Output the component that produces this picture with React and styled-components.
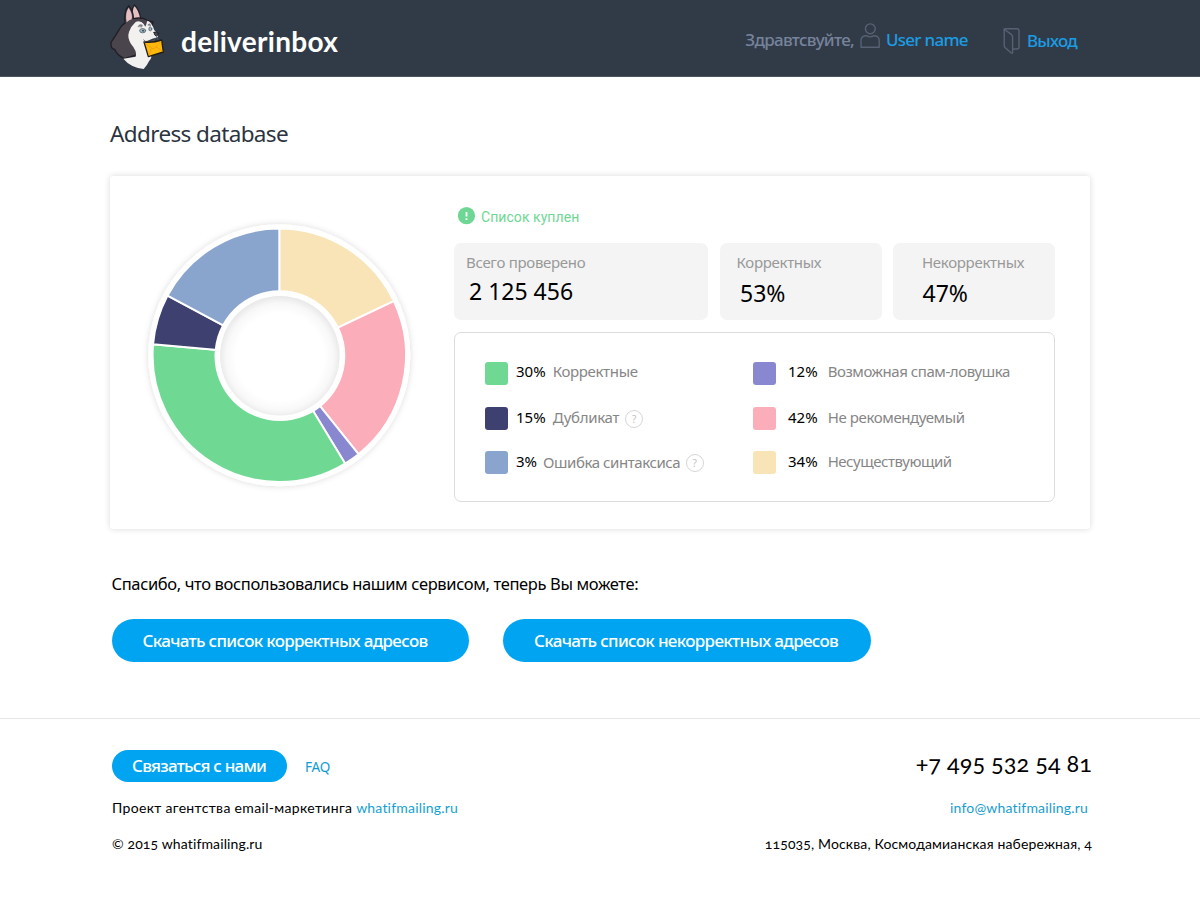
import React from 'react';
import styled, { createGlobalStyle } from 'styled-components';

const humanist = '"Noto Sans", "Open Sans", sans-serif';
const geometric = 'Lato, "Open Sans", sans-serif';

const GlobalStyle = createGlobalStyle`
  * { box-sizing: border-box; }
  body { margin: 0; background: #fff; color: #000; font-family: ${humanist}; }
  a { text-decoration: none; color: inherit; }
  svg { display: block; flex: none; }
`;

const Page = styled.div`
  width: 1200px;
  height: 897px;
  overflow: hidden;
`;

const Header = styled.header`
  height: 77px;
  padding: 0 123px 0 105px;
  background: #313b48;
  border-bottom: 1px solid #4a535f;
  display: flex;
  justify-content: space-between;
`;

const Brand = styled.a`
  display: flex;
  gap: 11px;
`;

const BrandName = styled.span`
  margin-top: 26px;
  font: 700 28px/30px ${geometric};
  letter-spacing: 0.3px;
  color: #fff;
`;

const UserNav = styled.nav`
  display: flex;
  align-items: flex-start;
  padding-top: 22px;
  font-size: 17px;
  font-weight: 500;
  line-height: 20px;
  letter-spacing: -0.72px;
  color: #1b9ce2;
`;

const Greeting = styled.span`
  margin: 8px 6px 0 0;
  color: #76839a;
`;

const UserLink = styled.a`
  display: flex;
  gap: 6px;
  margin-right: 35px;
  span { margin-top: 8px; }
`;

const ExitLink = styled.a`
  display: flex;
  gap: 7px;
  padding-top: 5px;
  span { margin-top: 4px; }
`;

const Main = styled.main`
  width: 980px;
  height: 641px;
  margin: 0 auto;
  padding-top: 42px;
`;

const Title = styled.h1`
  margin: 0 0 27px;
  font-size: 22.5px;
  font-weight: 400;
  line-height: 30px;
  letter-spacing: -0.63px;
  color: #2b3440;
`;

const Card = styled.section`
  height: 353px;
  display: flex;
  padding: 29px 35px 0 29px;
  border-radius: 3px;
  background: #fff;
  box-shadow: 0 0 6px rgba(0, 0, 0, 0.15);
`;

const ChartBox = styled.div`
  width: 315px;
  padding-top: 10px;
`;

const Details = styled.div`
  width: 601px;
`;

const Status = styled.p`
  display: flex;
  align-items: center;
  gap: 5px;
  height: 22px;
  margin: 0 0 16px;
  padding-left: 4px;
  font: 400 14px/18px Roboto, sans-serif;
  letter-spacing: 0.06px;
  color: #6fd794;
  span { padding-top: 1px; }
`;

const Stats = styled.div`
  display: grid;
  grid-template-columns: 254px 162px 162px;
  justify-content: space-between;
  margin-bottom: 12px;
`;

const Stat = styled.div`
  height: 77px;
  padding: 9px 0 0 ${p => p.$inset}px;
  border-radius: 7px;
  background: #f4f4f4;
`;

const StatLabel = styled.div`
  font-size: 15px;
  line-height: 20px;
  letter-spacing: -0.3px;
  color: #999;
`;

const StatValue = styled.div`
  margin: ${p => p.$top}px 0 0 ${p => p.$indent}px;
  font-size: 23px;
  line-height: 28px;
`;

const Legend = styled.div`
  height: 170px;
  display: grid;
  grid-template-columns: 268px 1fr;
  grid-template-rows: 45px 44px 23px;
  padding: 29px 0 0 30px;
  border: 1px solid #dcdcdc;
  border-radius: 7px;
`;

const LegendItem = styled.div`
  height: 23px;
  display: flex;
  align-items: flex-start;
  font-size: 15px;
  line-height: 18px;
`;

const Swatch = styled.i`
  width: 23px;
  height: 23px;
  border-radius: 3px;
  margin-right: ${p => p.$gap}px;
  background: ${p => p.$color};
`;

const Percent = styled.span`
  margin-right: ${p => p.$gap}px;
  padding-top: ${p => p.$top}px;
`;

const LegendName = styled.span`
  padding-top: ${p => p.$top}px;
  letter-spacing: ${p => p.$track}px;
  color: #868686;
`;

const Hint = styled.span`
  width: 18px;
  height: 18px;
  margin: 3px 0 0 ${p => p.$gap}px;
  border: 1px solid #d6d6d6;
  border-radius: 50%;
  font: 400 10px/16px ${humanist};
  text-align: center;
  color: #c2c2c2;
`;

const Thanks = styled.p`
  margin: 45px 0 25px 1.5px;
  font-size: 16.5px;
  line-height: 20px;
  letter-spacing: -0.36px;
`;

const Actions = styled.div`
  display: flex;
  gap: 34px;
  padding-left: 1.5px;
`;

const Button = styled.button`
  width: ${p => p.$width}px;
  height: ${p => p.$height}px;
  padding: 0 0 0 ${p => p.$inset}px;
  border: 0;
  border-radius: 22px;
  background: #00a4f1;
  color: #fff;
  font: 500 17px/20px ${humanist};
  letter-spacing: ${p => p.$track}px;
  text-align: left;
  white-space: nowrap;
`;

const Footer = styled.footer`
  height: 179px;
  padding: 31px 108px 0 112px;
  border-top: 1px solid #e6e6e6;
  display: flex;
  justify-content: space-between;
  font: 400 14px/18px ${geometric};
  font-variant-ligatures: none;
  font-variant-numeric: oldstyle-nums;
`;

const FooterColumn = styled.div`
  display: flex;
  flex-direction: column;
  align-items: ${p => p.$align};
`;

const ContactRow = styled.div`
  display: flex;
  align-items: flex-start;
  gap: 18px;
  margin-bottom: 17px;
`;

const FaqLink = styled.a`
  margin-top: 8px;
  font: 400 13.5px/18px ${humanist};
  letter-spacing: -0.2px;
  color: #0f9bd2;
`;

const Line = styled.div`
  margin-bottom: 18px;
  letter-spacing: ${p => p.$track || 0}px;
  a { color: #159fd0; letter-spacing: 0.2px; }
`;

const Email = styled.a`
  margin: 0 4px 18px 0;
  letter-spacing: 0.18px;
  color: #1b9ccf;
`;

const Phone = styled.div`
  height: 32px;
  margin-bottom: 17px;
  font-size: 23.5px;
  line-height: 27px;
`;

const Mascot = () => (
  <svg width="65" height="75" viewBox="0 0 195 225" strokeLinejoin="round" strokeLinecap="round">
    <path d="M81 58 Q78 30 88 15 Q104 30 107 56 Z" fill="#e3bfc2" stroke="#211f26" strokeWidth="4" />
    <path d="M60 70 Q56 34 71 17 Q86 36 85 56 Q108 50 127 61 L144 66 L110 160 L58 176 Q36 166 29 148 Q16 146 18 127 Q31 108 43 88 Q51 73 60 70 Z" fill="#4a444c" stroke="#1f1e25" strokeWidth="4" />
    <path d="M65 67 Q59 40 71 23 Q84 43 80 58 Q73 60 65 67 Z" fill="#e3bfc2" />
    <path d="M92 66 Q78 78 72 96 Q66 112 78 132 Q97 153 92 170 L55 176 Q76 202 116 207 Q126 197 132 184 Q145 169 134 158 L120 126 L142 116 L158 112 Q162 102 148 91 Q141 68 128 62 L119 73 Q105 60 92 66 Z" fill="#f2f1ef" />
    <path d="M74 72 Q84 54 103 61 Q116 68 121 80 Q128 67 124 61 Q99 51 82 61 Z" fill="#4a444c" />
    <path d="M99 79 Q104 71 112 75 L111 80 Z M129 74 Q133 68 137 75 L136 78 Z" fill="#85888c" stroke="#6b6b70" strokeWidth="1.5" />
    <ellipse cx="113" cy="92" rx="9" ry="6.5" fill="#9db8c2" stroke="#5b656d" strokeWidth="2.5" />
    <ellipse cx="136" cy="87" rx="4.5" ry="5.5" fill="#9db8c2" stroke="#5b656d" strokeWidth="2.5" />
    <circle cx="114" cy="92" r="2.6" fill="#2c3742" />
    <path d="M147 97 Q155 93 160 99 Q160 107 154 109 Q147 106 147 97 Z" fill="#4b494f" stroke="#1d1c21" strokeWidth="2.5" />
    <path d="M116 120 Q120 127 129 124 Q147 126 154 113 Q159 115 160 121" fill="none" stroke="#5a5960" strokeWidth="2.5" />
    <path d="M117 126 Q145 129 170 120 L175 156 L130 170 Z" fill="#feb70d" stroke="#211d16" strokeWidth="4" />
    <path d="M120 129 L143 146 Q147 148 149 144 L168 124 M132 166 L139 146 M172 153 L154 141" fill="none" stroke="#e59a08" strokeWidth="2" />
  </svg>
);

const UserIcon = () => (
  <svg width="20" height="28" viewBox="0 0 20 28" fill="none" stroke="#566172" strokeWidth="1.4">
    <circle cx="10.3" cy="6.8" r="4.9" />
    <path d="M6.6 13.7 C3 13.7 1 15.5 1 18.5 V25.3 H19.2 V18.5 C19.2 15.5 17.2 13.7 13.8 13.7 Q10.2 16 6.6 13.7 Z" strokeLinejoin="round" />
  </svg>
);

const ExitIcon = () => (
  <svg width="17" height="28" viewBox="0 0 17 28" fill="none" stroke="#566172" strokeWidth="1.4" strokeLinejoin="round">
    <path d="M1.2 2.8 Q1.2 1.8 2.2 1.8 H14 Q16 1.8 16 3.8 V20 Q16 22 14 22 H9.8" />
    <path d="M1.2 2.2 L8.2 7.4 Q9.6 8.5 9.6 10 V25.2 Q9.6 27 8 25.8 L2.2 20.7 Q1.2 19.8 1.2 18.5 Z" />
  </svg>
);

const AlertIcon = () => (
  <svg width="18" height="18" viewBox="0 0 18 18">
    <circle cx="8.5" cy="8.7" r="8.6" fill="#6fd794" />
    <path d="M8.5 5 V9.6 M8.5 11.2 V13" stroke="#fff" strokeWidth="1.8" />
  </svg>
);

const slices = [
  { from: 0, to: 64.7, color: '#f8e4b7' },
  { from: 64.7, to: 141.3, color: '#fbaeb9' },
  { from: 141.3, to: 148.7, color: '#8887d0' },
  { from: 148.7, to: 275, color: '#6fd994' },
  { from: 275, to: 298.1, color: '#3e4170' },
  { from: 298.1, to: 360, color: '#8aa5cd' },
];

const point = (radius, angle) => {
  const rad = (angle * Math.PI) / 180;
  return `${(radius * Math.sin(rad)).toFixed(2)} ${(-radius * Math.cos(rad)).toFixed(2)}`;
};

const slicePath = ({ from, to }) =>
  `M${point(126.7, from)} A126.7 126.7 0 0 1 ${point(126.7, to)} L${point(62, to)} A62 62 0 0 0 ${point(62, from)} Z`;

const Donut = () => (
  <svg width="282" height="282" viewBox="-140.3 -140.3 282 282">
    <defs>
      <filter id="halo" x="-10%" y="-10%" width="120%" height="120%">
        <feDropShadow dx="0" dy="0" stdDeviation="3" floodColor="#000" floodOpacity="0.15" />
      </filter>
      <radialGradient id="well" cx="0.6" cy="1.8" r="61" gradientUnits="userSpaceOnUse">
        <stop offset="0.72" stopColor="#fff" />
        <stop offset="0.88" stopColor="#f8f8f8" />
        <stop offset="1" stopColor="#e8e8e8" />
      </radialGradient>
    </defs>
    <circle r="131" fill="#fff" filter="url(#halo)" />
    {slices.map(s => (
      <path key={s.from} d={slicePath(s)} fill={s.color} stroke="#fff" strokeWidth="2" />
    ))}
    <circle cx="0.6" cy="0.4" r="65.4" fill="#fff" />
    <circle cx="0.6" cy="0.4" r="59.8" fill="url(#well)" />
  </svg>
);

const legend = [
  { color: '#6fd994', percent: '30%', name: 'Корректные', track: -0.33, gap: 8, nameGap: 7, top: 0 },
  { color: '#8887d0', percent: '12%', name: 'Возможная спам-ловушка', track: -0.44, gap: 12, nameGap: 10, top: 0 },
  { color: '#3e4170', percent: '15%', name: 'Дубликат', track: -0.3, gap: 8, nameGap: 7, top: 1, hintGap: 6 },
  { color: '#fbaeb9', percent: '42%', name: 'Не рекомендуемый', track: -0.38, gap: 12, nameGap: 10, top: 1 },
  { color: '#8aa5cd', percent: '3%', name: 'Ошибка синтаксиса', track: -0.42, gap: 8, nameGap: 6, top: 1, drop: 1, hintGap: 5.5 },
  { color: '#f8e4b7', percent: '34%', name: 'Несуществующий', track: -0.47, gap: 12, nameGap: 10, top: 1 },
];

export default function App() {
  return (
    <Page>
      <GlobalStyle />
      <Header>
        <Brand href="#">
          <Mascot />
          <BrandName>deliverinbox</BrandName>
        </Brand>
        <UserNav>
          <Greeting>Здравтсвуйте,</Greeting>
          <UserLink href="#"><UserIcon /><span>User name</span></UserLink>
          <ExitLink href="#"><ExitIcon /><span>Выход</span></ExitLink>
        </UserNav>
      </Header>

      <Main>
        <Title>Address database</Title>
        <Card>
          <ChartBox><Donut /></ChartBox>
          <Details>
            <Status><AlertIcon /><span>Список куплен</span></Status>
            <Stats>
              <Stat $inset={12}>
                <StatLabel>Всего проверено</StatLabel>
                <StatValue $top={5} $indent={3}>2 125 456</StatValue>
              </Stat>
              <Stat $inset={17}>
                <StatLabel>Корректных</StatLabel>
                <StatValue $top={7} $indent={3.5}>53%</StatValue>
              </Stat>
              <Stat $inset={29}>
                <StatLabel>Некорректных</StatLabel>
                <StatValue $top={7} $indent={0.5}>47%</StatValue>
              </Stat>
            </Stats>
            <Legend>
              {legend.map(item => (
                <LegendItem key={item.name}>
                  <Swatch $color={item.color} $gap={item.gap} />
                  <Percent $gap={item.nameGap} $top={item.top}>{item.percent}</Percent>
                  <LegendName $track={item.track} $top={item.top + (item.drop || 0)}>{item.name}</LegendName>
                  {item.hintGap && <Hint $gap={item.hintGap}>?</Hint>}
                </LegendItem>
              ))}
            </Legend>
          </Details>
        </Card>
        <Thanks>Спасибо, что воспользовались нашим сервисом, теперь Вы можете:</Thanks>
        <Actions>
          <Button $width={357.5} $height={43} $inset={31} $track={-0.67}>Скачать список корректных адресов</Button>
          <Button $width={367.5} $height={43} $inset={31} $track={-0.66}>Скачать список некорректных адресов</Button>
        </Actions>
      </Main>

      <Footer>
        <FooterColumn $align="flex-start">
          <ContactRow>
            <Button $width={175} $height={32} $inset={20} $track={-0.76}>Связаться с нами</Button>
            <FaqLink href="#">FAQ</FaqLink>
          </ContactRow>
          <Line $track={0.33}>Проект агентства email-маркетинга <a href="#">whatifmailing.ru</a></Line>
          <Line $track={0.13}>© 2015 whatifmailing.ru</Line>
        </FooterColumn>
        <FooterColumn $align="flex-end">
          <Phone>+7 495 532 54 81</Phone>
          <Email href="#">info@whatifmailing.ru</Email>
          <Line $track={0.14}>115035, Москва, Космодамианская набережная, 4</Line>
        </FooterColumn>
      </Footer>
    </Page>
  );
}
